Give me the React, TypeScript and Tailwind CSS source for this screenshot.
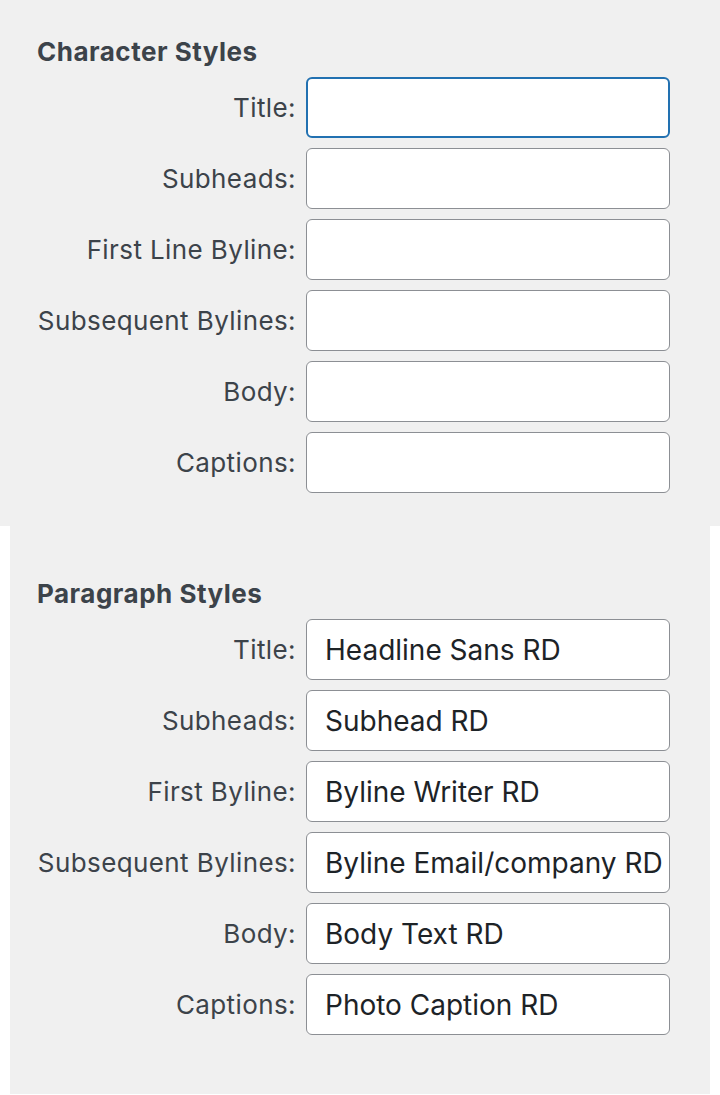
const font = { fontFamily: "Inter, 'Noto Sans', sans-serif" };

type Row = { label: string; value: string; focus?: boolean };

const charRows: Row[] = [
  { label: "Title:", value: "", focus: true },
  { label: "Subheads:", value: "" },
  { label: "First Line Byline:", value: "" },
  { label: "Subsequent Bylines:", value: "" },
  { label: "Body:", value: "" },
  { label: "Captions:", value: "" },
];

const paraRows: Row[] = [
  { label: "Title:", value: "Headline Sans RD" },
  { label: "Subheads:", value: "Subhead RD" },
  { label: "First Byline:", value: "Byline Writer RD" },
  { label: "Subsequent Bylines:", value: "Byline Email/company RD" },
  { label: "Body:", value: "Body Text RD" },
  { label: "Captions:", value: "Photo Caption RD" },
];

function Field({ row, labelW }: { row: Row; labelW: string }) {
  return (
    <div className="flex items-center">
      <label className={`${labelW} shrink-0 pr-[10px] text-right text-[26px] tracking-[0.4px] text-[#3c434a]`}>{row.label}</label>
      <div
        className={
          "h-[61px] w-[364px] overflow-hidden whitespace-nowrap rounded-[6px] bg-white pl-[18px] text-[28px] text-[#1d2327] " +
          (row.focus ? "border-2 border-[#2271b1] leading-[59px]" : "border border-[#8c8f94] leading-[61px]")
        }
      >
        {row.value}
      </div>
    </div>
  );
}

export default function App() {
  return (
    <div className="min-h-[1095px] bg-white" style={font}>
      <section className="bg-[#f0f0f0] pt-[37px] pb-[33px]">
        <h2 className="pl-[37px] text-[26px] font-bold leading-[30px] tracking-[0.5px] text-[#3c434a]">Character Styles</h2>
        <div className="mt-[10px] flex flex-col gap-[10px]">
          {charRows.map((r) => (
            <Field key={r.label} row={r} labelW="w-[306px]" />
          ))}
        </div>
      </section>
      <section className="mx-[10px] h-[568px] bg-[#f0f0f0] pt-[53px]">
        <h2 className="pl-[27px] text-[26px] font-bold leading-[30px] tracking-[0.5px] text-[#3c434a]">Paragraph Styles</h2>
        <div className="mt-[10px] flex flex-col gap-[10px]">
          {paraRows.map((r) => (
            <Field key={r.label} row={r} labelW="w-[296px]" />
          ))}
        </div>
      </section>
    </div>
  );
}
